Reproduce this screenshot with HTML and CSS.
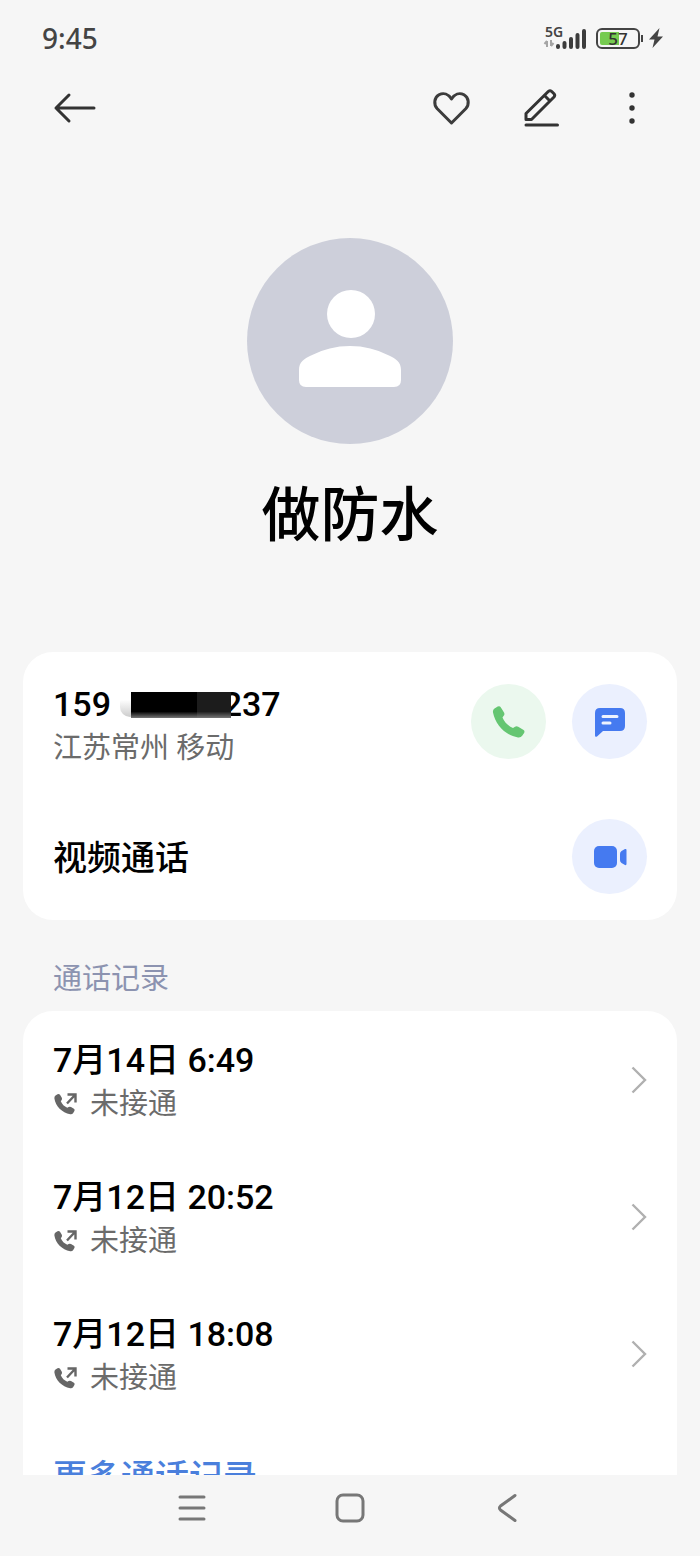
FILE: index.html
```
<!DOCTYPE html>
<html lang="zh-CN">
<head>
    <meta charset="UTF-8">
    <meta name="viewport" content="width=device-width, initial-scale=1.0">
    <title>做防水</title>
    <link rel="stylesheet" href="styles.css">
</head>
<body>
    <!-- Status bar -->
    <div class="status-bar">
        <span class="clock">9:45</span>
        <div class="status-icons">
            <div class="network">
                <span class="network-type">5G</span>
                <svg width="44" height="24" viewBox="0 0 44 24">
                    <path d="M4 15v6M1.500 18l2.500-3M8 14v6M10.500 17l-2.500 3" fill="none" stroke="#a5a5a5" stroke-width="2"/>
                    <path d="M15 21v-1M21.500 21v-4M28 21v-8M34.500 21v-12M41 21v-16" fill="none" stroke="#3c3c3c" stroke-width="4" stroke-linecap="round"/>
                </svg>
            </div>
            <div class="battery"><span>57</span></div>
            <svg class="bolt" width="14" height="20" viewBox="0 0 14 20">
                <path d="M10.500 0L0 11.500h5.500L3.500 20 14 8.500H8.500z" fill="#444"/>
            </svg>
        </div>
    </div>

    <!-- Toolbar -->
    <header class="toolbar">
        <button class="icon-btn" aria-label="返回">
            <svg width="44" height="44" viewBox="0 0 44 44" fill="none" stroke="#333" stroke-width="3" stroke-linecap="round" stroke-linejoin="round">
                <path d="M41 22H3M16 9L3 22l13 13"/>
            </svg>
        </button>
        <div class="toolbar-actions">
            <button class="icon-btn" aria-label="收藏">
                <svg width="44" height="44" viewBox="0 0 44 44" fill="none" stroke="#3c3c3c" stroke-width="3" stroke-linejoin="round">
                    <path d="M21.500 37L7.300 22.700C3.200 18.300 4.300 11.500 9 8.800c4.500-2.500 9.500-.8 12.500 4.200 3-5 8-6.700 12.500-4.200 4.700 2.700 5.800 9.500 1.700 13.900z"/>
                </svg>
            </button>
            <button class="icon-btn" aria-label="编辑">
                <svg width="44" height="44" viewBox="0 0 44 44" fill="none" stroke="#333" stroke-width="3" stroke-linejoin="round" stroke-linecap="round">
                    <path d="M6 33.500v-6L28.500 5.300q1.500-1.200 3 0l2.500 2.500q1.400 1.500 0 3.200L11.500 33.500zM24.500 9.500l5.500 5.500"/>
                    <path d="M6 39h31.500"/>
                </svg>
            </button>
            <button class="icon-btn" aria-label="更多">
                <svg width="44" height="44" viewBox="0 0 44 44" fill="#333">
                    <circle cx="22" cy="9" r="2.700"/>
                    <circle cx="22" cy="22" r="2.700"/>
                    <circle cx="22" cy="35" r="2.700"/>
                </svg>
            </button>
        </div>
    </header>

    <!-- Contact -->
    <main class="content">
        <section class="profile">
            <svg class="avatar" viewBox="0 0 206 206">
                <circle cx="103" cy="103" r="103" fill="#cdcfda"/>
                <circle cx="104" cy="76" r="24" fill="#fff"/>
                <path d="M52 132c0-8 5-11 12-14.500Q82 108 103 108t39 9.500c7 3.500 12 6.500 12 14.500v10q0 7-7 7H59q-7 0-7-7z" fill="#fff"/>
            </svg>
            <h1>做防水</h1>
        </section>

        <section class="card numbers">
            <div class="number-row">
                <div class="number-text">
                    <p class="strong">159<span class="mask">2</span>37</p>
                    <p class="muted">江苏常州 移动</p>
                </div>
                <button class="round-btn green" aria-label="拨打电话">
                    <svg width="34" height="34" viewBox="0 0 34 34">
                        <path d="M2.500 3.500l3.200-2q2-1 3.200 1L12 7.500q1 1.800-.3 3.300L10.500 12.500c1.700 4.500 5.500 8.300 10.500 10.500l2-1.200q1.500-1 3.200 0l5 2.900q2 1.200.9 3.200l-1.900 2.900q-1.500 2-4.200 1.600C13.500 30.500 3.500 20 1 7.500q-.4-2.700 1.500-4z" fill="#65c672"/>
                    </svg>
                </button>
                <button class="round-btn blue" aria-label="发送信息">
                    <svg width="34" height="34" viewBox="0 0 34 34">
                        <path d="M7 3h20q5 0 5 5v13q0 5-5 5H10l-6 5.500q-2 1-2-1V8q0-5 5-5z" fill="#457af0"/>
                        <path d="M10 11.500h14M10 18h7" stroke="#edf2fe" stroke-width="3" stroke-linecap="round"/>
                    </svg>
                </button>
            </div>
            <div class="number-row">
                <p class="strong video-label">视频通话</p>
                <button class="round-btn blue" aria-label="视频通话">
                    <svg width="34" height="34" viewBox="0 0 34 34">
                        <rect x="1" y="6" width="23" height="22" rx="5" fill="#457af0"/>
                        <path d="M27 14q0-2 1.500-3l3.500-2q1.500-.5 1.500 1v14q0 1.500-1.500 1l-3.500-2q-1.500-1-1.500-3z" fill="#457af0"/>
                    </svg>
                </button>
            </div>
        </section>

        <h2>通话记录</h2>

        <section class="card calls">
            <a href="#" class="call">
                <div class="call-text">
                    <p class="strong">7月14日 6:49</p>
                    <p class="muted"><svg class="outgoing" viewBox="0 0 24 24"><use href="#outgoing"/></svg>未接通</p>
                </div>
                <svg class="chevron" viewBox="0 0 16 28"><use href="#chevron"/></svg>
            </a>
            <a href="#" class="call">
                <div class="call-text">
                    <p class="strong">7月12日 20:52</p>
                    <p class="muted"><svg class="outgoing" viewBox="0 0 24 24"><use href="#outgoing"/></svg>未接通</p>
                </div>
                <svg class="chevron" viewBox="0 0 16 28"><use href="#chevron"/></svg>
            </a>
            <a href="#" class="call">
                <div class="call-text">
                    <p class="strong">7月12日 18:08</p>
                    <p class="muted"><svg class="outgoing" viewBox="0 0 24 24"><use href="#outgoing"/></svg>未接通</p>
                </div>
                <svg class="chevron" viewBox="0 0 16 28"><use href="#chevron"/></svg>
            </a>
            <a href="#" class="more">更多通话记录</a>
        </section>
    </main>

    <!-- System navigation -->
    <nav class="system-nav">
        <button class="icon-btn" aria-label="最近任务">
            <svg width="32" height="32" viewBox="0 0 32 32" stroke="#777" stroke-width="3" stroke-linecap="round">
                <path d="M4 5h24M4 16h24M4 27h24"/>
            </svg>
        </button>
        <button class="icon-btn" aria-label="主屏幕">
            <svg width="32" height="32" viewBox="0 0 32 32" fill="none" stroke="#777" stroke-width="3">
                <rect x="3" y="3" width="26" height="26" rx="6"/>
            </svg>
        </button>
        <button class="icon-btn" aria-label="返回">
            <svg width="32" height="32" viewBox="0 0 32 32" fill="none" stroke="#777" stroke-width="3" stroke-linecap="round">
                <path d="M23 3.500L8.500 14q-2.200 2 0 4L23 28.500"/>
            </svg>
        </button>
    </nav>

    <!-- Shared icons -->
    <svg class="sprite" width="0" height="0">
        <symbol id="outgoing" viewBox="0 0 24 24">
            <path d="M2.500 3.500l2-1.300q1.500-.8 2.500.6l1.800 3q.7 1.300-.3 2.500l-.7 1c1.200 3 3.500 5.200 6.500 6.500l1.300-.8q1.200-.7 2.400 0l2.900 1.700q1.300 1 .5 2.300l-1.200 2q-1 1.500-3 1.200C9 20.800 2.500 14 1.400 6.500Q1.100 4.600 2.500 3.500z" fill="#666"/>
            <path d="M14 11.500l8-8.500M14.500 2.500h8v8" fill="none" stroke="#666" stroke-width="2.400"/>
        </symbol>
        <symbol id="chevron" viewBox="0 0 16 28">
            <path d="M1.500 1.500L14 14 1.500 26.500" fill="none" stroke="#b0b0b0" stroke-width="2.400"/>
        </symbol>
    </svg>
</body>
</html>
```
FILE: styles.css
```
* {
    margin: 0;
    padding: 0;
    box-sizing: border-box;
}

body {
    display: flex;
    flex-direction: column;
    height: 100vh;
    overflow: hidden;
    background-color: #f6f6f6;
    color: #000;
    font-family: Roboto, "Noto Sans CJK SC", sans-serif;
}

button {
    border: none;
    background: none;
    cursor: pointer;
}

a {
    color: inherit;
    text-decoration: none;
}

svg {
    display: block;
    flex-shrink: 0;
}

/* Status bar */
.status-bar {
    display: flex;
    justify-content: space-between;
    align-items: center;
    height: 76px;
    padding: 0 37px 0 42px;
    flex-shrink: 0;
}

.clock {
    font-family: "Noto Sans", sans-serif;
    font-size: 28px;
    font-weight: 500;
    color: #444;
}

.status-icons {
    display: flex;
    align-items: center;
}

.network {
    position: relative;
    margin-right: 9px;
}

.network-type {
    position: absolute;
    top: -1px;
    left: 2px;
    font-family: "Noto Sans", sans-serif;
    font-size: 14px;
    font-weight: 600;
    line-height: 14px;
    color: #444;
}

.battery {
    position: relative;
    width: 44px;
    height: 21px;
    margin-right: 9px;
    border: 2px solid #444;
    border-radius: 6px;
    background: linear-gradient(to right, #76cb50 52%, transparent 52%) content-box;
    padding: 2px;
    text-align: center;
    font-family: "Noto Sans", sans-serif;
    font-size: 17px;
    font-weight: 500;
    line-height: 14px;
    color: #333;
}

.battery::after {
    content: "";
    position: absolute;
    top: 5px;
    right: -5px;
    width: 2px;
    height: 7px;
    background-color: #444;
}

/* Toolbar */
.toolbar {
    display: flex;
    justify-content: space-between;
    align-items: center;
    height: 64px;
    padding: 0 46px 0 53px;
    flex-shrink: 0;
}

.toolbar-actions {
    display: flex;
    gap: 46px;
}

/* Content */
.content {
    flex: 1;
    min-height: 0;
    padding: 0 23px;
    overflow: hidden;
}

.profile {
    padding: 98px 0 92px;
    text-align: center;
}

.avatar {
    width: 206px;
    height: 206px;
    margin: 0 auto 28px;
}

h1 {
    font-size: 59px;
    font-weight: 500;
    line-height: 88px;
}

.card {
    background-color: #fff;
    border-radius: 30px;
}

.numbers {
    display: flex;
    flex-direction: column;
    gap: 47px;
    padding: 32px 30px 23px;
}

.number-row {
    display: flex;
    gap: 26px;
}

.number-text,
.video-label {
    flex: 1;
}

.strong {
    font-size: 34px;
    font-weight: 500;
    line-height: 40px;
}

.muted {
    display: flex;
    align-items: center;
    font-size: 29px;
    line-height: 48px;
    color: #6b6b6b;
}

.number-row .video-label {
    line-height: 78px;
}

/* Hidden digits of the phone number */
.mask {
    position: relative;
    display: inline-block;
    width: 131px;
    text-align: right;
}

.mask::before {
    content: "";
    position: absolute;
    top: 8px;
    left: 9px;
    width: 20px;
    height: 25px;
    border-radius: 12px;
    background: linear-gradient(to bottom, #fff 30%, #ccc);
}

.mask::after {
    content: "";
    position: absolute;
    top: 8px;
    left: 20px;
    right: 11px;
    height: 26px;
    background: linear-gradient(to bottom, transparent 75%, #777), linear-gradient(to right, #000 66%, #1c1c1c 66%);
}

.round-btn {
    display: flex;
    justify-content: center;
    align-items: center;
    width: 75px;
    height: 75px;
    border-radius: 50%;
}

.round-btn.green {
    background-color: #ebf8ee;
}

.round-btn.blue {
    background-color: #ebf0fe;
}

h2 {
    padding: 39px 30px 12px;
    font-size: 29px;
    font-weight: 400;
    line-height: 40px;
    color: #8c93b0;
}

/* Call log */
.call {
    display: flex;
    justify-content: space-between;
    align-items: center;
    height: 137px;
    padding: 0 30px;
}

.call-text {
    padding-top: 8px;
}

.outgoing {
    width: 24px;
    height: 24px;
    margin-right: 13px;
}

.chevron {
    width: 16px;
    height: 28px;
}

.more {
    display: block;
    padding: 0 30px;
    font-size: 34px;
    font-weight: 500;
    line-height: 110px;
    color: #4a7fdc;
}

/* System navigation */
.system-nav {
    display: flex;
    justify-content: center;
    gap: 126px;
    height: 81px;
    padding-top: 17px;
    flex-shrink: 0;
    background-color: #f6f6f6;
}

.system-nav .icon-btn {
    height: 32px;
}

.sprite {
    position: absolute;
}
```
